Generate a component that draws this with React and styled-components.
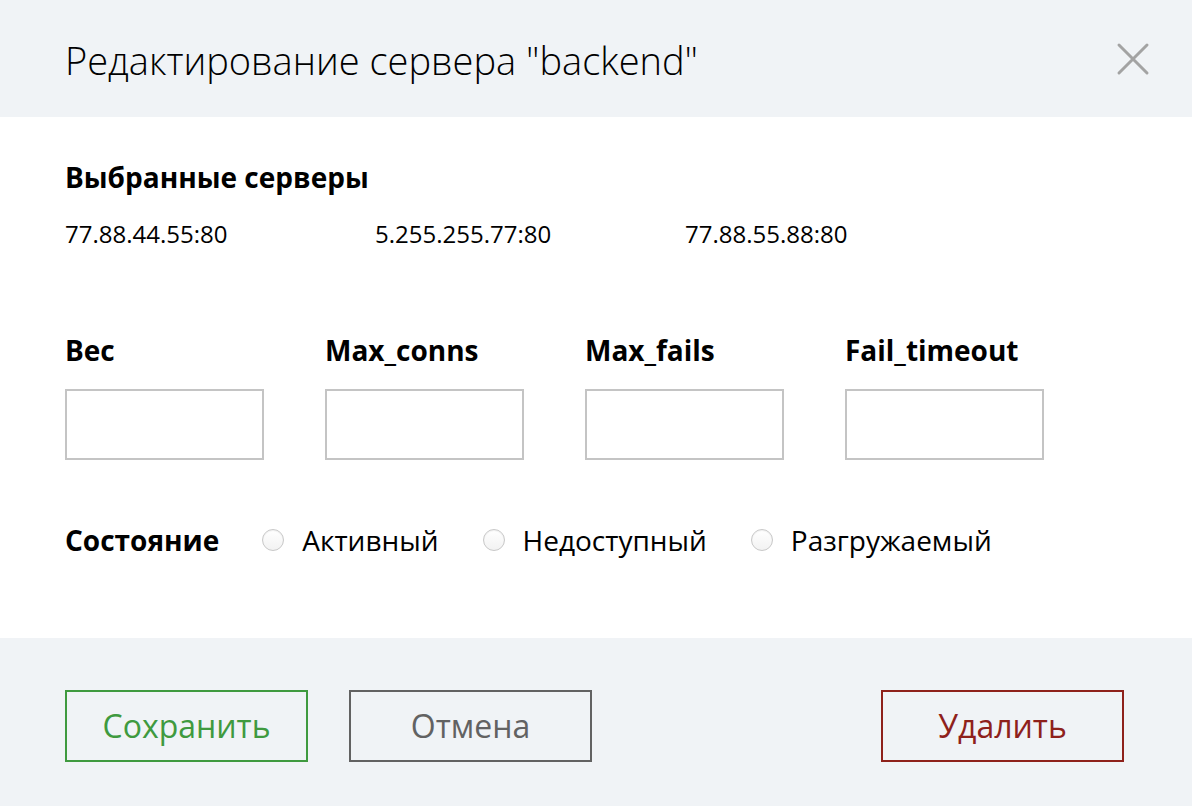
import React from "react";
import styled, { createGlobalStyle } from "styled-components";

const GlobalStyle = createGlobalStyle`
  html, body {
    margin: 0;
    padding: 0;
    background: #fff;
  }
  body {
    font-family: "Open Sans", "Noto Sans", sans-serif;
    color: #000;
  }
`;

const Modal = styled.div`
  width: 1192px;
  height: 806px;
  display: flex;
  flex-direction: column;
`;

const Header = styled.header`
  height: 117px;
  background: #f0f3f6;
  display: flex;
  align-items: center;
  justify-content: space-between;
  padding: 0 42px 0 65px;
  box-sizing: border-box;
  h1 {
    margin: 0;
    font-size: 38px;
    font-weight: 300;
    line-height: 48px;
    margin-top: 2px;
  }
`;

const CloseButton = styled.button`
  width: 34px;
  height: 34px;
  padding: 0;
  border: none;
  background: none;
  cursor: pointer;
  margin-top: 0;
  svg {
    display: block;
  }
`;

const Body = styled.section`
  flex: 1;
  padding: 44px 65px 0 65px;
  box-sizing: border-box;
`;

const Title = styled.h3`
  margin: 0;
  font-size: 28px;
  font-weight: 700;
  line-height: 32px;
`;

const Servers = styled.div`
  display: grid;
  grid-template-columns: repeat(3, 310px);
  margin-top: 25px;
  font-size: 24px;
  line-height: 32px;
`;

const Fields = styled.div`
  display: grid;
  grid-template-columns: repeat(4, 199px);
  column-gap: 61px;
  margin-top: 82px;
`;

const Field = styled.label`
  display: flex;
  flex-direction: column;
  gap: 21px;
  span {
    font-size: 28px;
    font-weight: 700;
    line-height: 36px;
  }
`;

const Input = styled.input`
  width: 199px;
  height: 71px;
  box-sizing: border-box;
  border: 2px solid #c4c4c4;
  background: #fff;
  outline: none;
  font-family: inherit;
  font-size: 22px;
  padding: 0 12px;
`;

const StateRow = styled.div`
  display: flex;
  align-items: center;
  margin-top: 60px;
  font-size: 28px;
  line-height: 40px;
  b {
    font-weight: 700;
    margin-right: 43px;
  }
`;

const Radio = styled.label`
  display: flex;
  align-items: center;
  gap: 18px;
  margin-right: 44px;
  font-size: 28px;
  cursor: pointer;
  input {
    appearance: none;
    margin: 0;
    width: 22px;
    height: 22px;
    border-radius: 50%;
    border: 1px solid #c8c8c8;
    background: linear-gradient(#ffffff, #f2f2f2);
    box-shadow: inset 0 1px 1px rgba(0, 0, 0, 0.06);
  }
`;

const Footer = styled.footer`
  height: 168px;
  background: #f0f3f6;
  display: flex;
  align-items: center;
  padding: 7px 68px 0 65px;
  box-sizing: border-box;
  gap: 41px;
`;

const Button = styled.button`
  width: 243px;
  height: 72px;
  box-sizing: border-box;
  background: transparent;
  border: 2px solid ${(p) => p.$color};
  color: ${(p) => p.$color};
  font-family: inherit;
  font-size: 32px;
  cursor: pointer;
  margin-left: ${(p) => (p.$push ? "auto" : "0")};
`;

export default function App() {
  return (
    <>
      <GlobalStyle />
      <Modal>
        <Header>
          <h1>Редактирование сервера "backend"</h1>
          <CloseButton aria-label="Закрыть">
            <svg width="34" height="34" viewBox="0 0 34 34">
              <path
                d="M3 3 L31 31 M31 3 L3 31"
                stroke="#a3a3a3"
                strokeWidth="3"
                strokeLinecap="round"
              />
            </svg>
          </CloseButton>
        </Header>
        <Body>
          <Title>Выбранные серверы</Title>
          <Servers>
            <div>77.88.44.55:80</div>
            <div>5.255.255.77:80</div>
            <div>77.88.55.88:80</div>
          </Servers>
          <Fields>
            {["Вес", "Max_conns", "Max_fails", "Fail_timeout"].map((f) => (
              <Field key={f}>
                <span>{f}</span>
                <Input type="text" />
              </Field>
            ))}
          </Fields>
          <StateRow>
            <b>Состояние</b>
            {["Активный", "Недоступный", "Разгружаемый"].map((s) => (
              <Radio key={s}>
                <input type="radio" name="state" />
                {s}
              </Radio>
            ))}
          </StateRow>
        </Body>
        <Footer>
          <Button $color="#3f9a3f">Сохранить</Button>
          <Button $color="#626262">Отмена</Button>
          <Button $color="#8e211b" $push>
            Удалить
          </Button>
        </Footer>
      </Modal>
    </>
  );
}
